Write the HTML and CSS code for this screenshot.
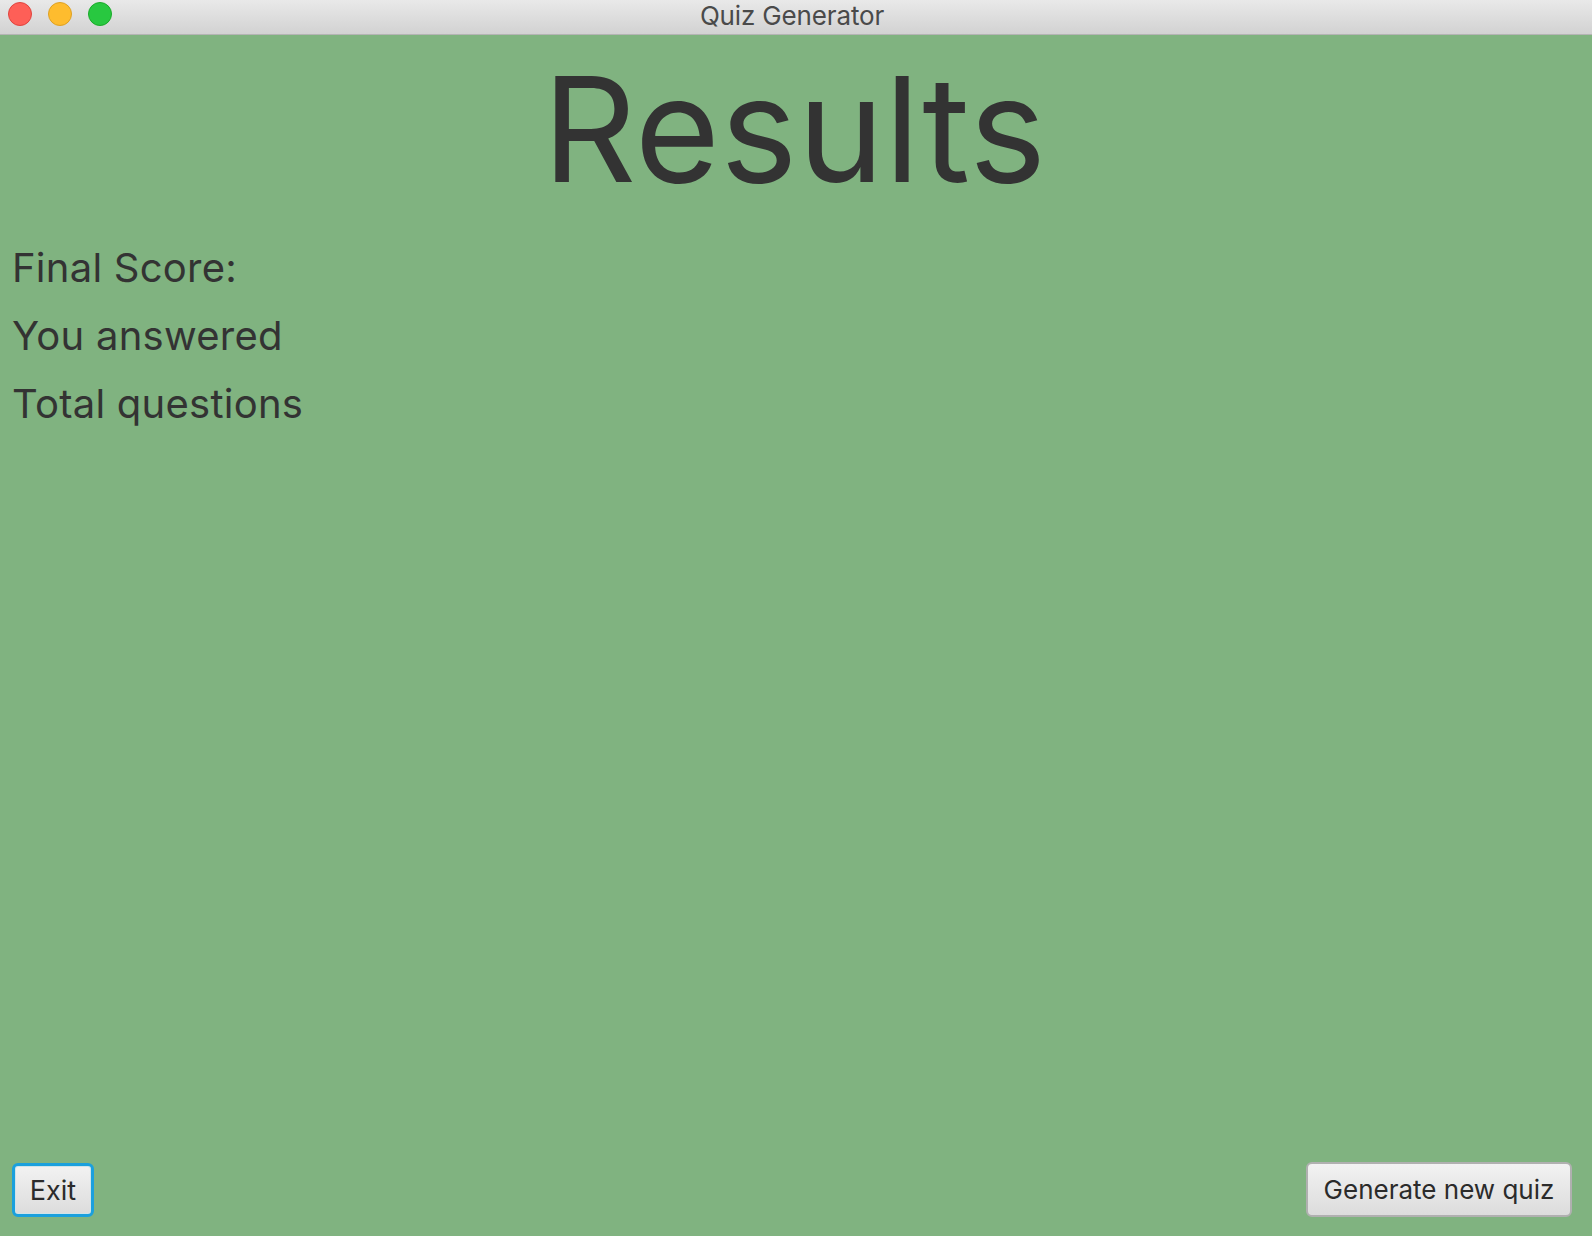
FILE: index.html
```
<!DOCTYPE html>
<html>
<head>
<meta charset="utf-8">
<link rel="stylesheet" href="styles.css">
</head>
<body>
<div class="window">
  <div class="titlebar">
    <div class="lights">
      <span class="light red"></span>
      <span class="light yellow"></span>
      <span class="light green"></span>
    </div>
    <div class="wtitle">Quiz Generator</div>
  </div>
  <div class="content">
    <h1 class="heading">Results</h1>
    <div class="labels">
      <div class="label">Final Score:</div>
      <div class="label">You answered</div>
      <div class="label">Total questions</div>
    </div>
    <div class="spacer"></div>
    <div class="footer">
      <button class="btn btn-focus">Exit</button>
      <button class="btn">Generate new quiz</button>
    </div>
  </div>
</div>
</body>
</html>
```

FILE: styles.css
```
html, body {
  margin: 0;
  padding: 0;
  height: 100%;
}
body {
  font-family: Inter, "Noto Sans", sans-serif;
  background: #80b380;
}
.window {
  display: flex;
  flex-direction: column;
  height: 1236px;
  overflow: hidden;
}
.titlebar {
  position: relative;
  height: 34px;
  flex: none;
  background: linear-gradient(#e9e9e9, #d2d2d2);
  border-bottom: 1px solid #b4b4b4;
  display: flex;
  align-items: center;
  justify-content: center;
}
.lights {
  position: absolute;
  left: 8px;
  top: 2px;
  display: flex;
  gap: 16px;
}
.light {
  width: 22px;
  height: 22px;
  border-radius: 50%;
  border: 1px solid rgba(0,0,0,0.12);
}
.red { background: #fe5f57; border-color: #e0443e; }
.yellow { background: #febc2e; border-color: #dea123; }
.green { background: #28c840; border-color: #1aab29; }
.wtitle {
  font-size: 26px;
  letter-spacing: -0.15px;
  color: #4a4a4a;
  margin-right: 8px;
  margin-top: -3px;
}
.content {
  flex: 1;
  display: flex;
  flex-direction: column;
  padding: 0 20px 19px 12px;
}
.heading {
  margin: 21px 0 0 0;
  font-size: 146px;
  font-weight: 400;
  line-height: 1;
  letter-spacing: 0.4px;
  text-align: center;
  color: #333333;
  padding-left: 5px;
}
.labels {
  margin-top: 32px;
}
.label {
  font-size: 40px;
  line-height: 68px;
  letter-spacing: 0.25px;
  color: #333333;
}
.spacer { flex: 1; }
.footer {
  display: flex;
  justify-content: space-between;
  align-items: flex-end;
}
.btn {
  font-family: Inter, "Noto Sans", sans-serif;
  font-size: 26px;
  color: #2b2b2b;
  height: 55px;
  width: 266px;
  padding: 0;
  border: 2px solid #b0b0b0;
  border-radius: 6px;
  background: linear-gradient(#f2f2f2, #dcdcdc);
}
.btn-focus {
  font-size: 27px;
  border: 3px solid #1aa0dd;
  box-shadow: inset 0 0 0 1px #cfe3ea;
  height: 54px;
  width: 82px;
  padding: 0;
}
```
